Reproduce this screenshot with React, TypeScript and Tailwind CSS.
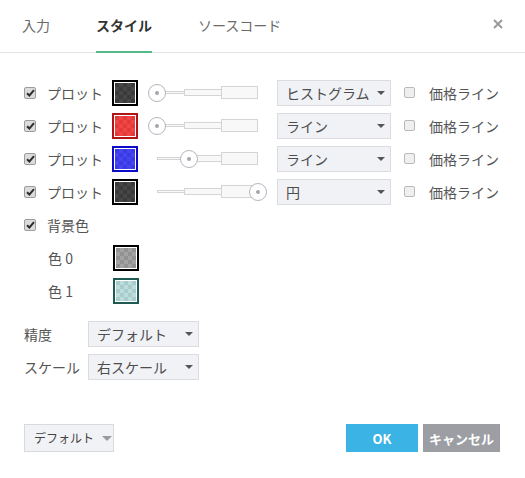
import React from "react";

const FONT = "font-['Noto_Sans_CJK_JP','Noto_Sans',sans-serif]";

function CheckOn() {
  return (
    <div className="w-[12px] h-[12px] rounded-[2px] border border-[#9c9c9c] bg-[#dcdcdc] flex items-center justify-center shrink-0">
      <svg width="9" height="8" viewBox="0 0 9 8">
        <path d="M1 4.2 L3.4 6.5 L8 1.2" fill="none" stroke="#2e2e2e" strokeWidth="2" />
      </svg>
    </div>
  );
}

function CheckOff() {
  return <div className="w-[11px] h-[11px] rounded-[2px] border border-[#b9b9b9] bg-[#efefef] shrink-0" />;
}

function Caret({ cls = "border-t-[#555]" }: { cls?: string }) {
  return (
    <div className={`w-0 h-0 border-l-[4px] border-r-[4px] border-t-[4px] border-l-transparent border-r-transparent ${cls}`} />
  );
}

function Swatch({ border, bg }: { border: string; bg: string }) {
  return (
    <div className={`w-[26px] h-[26px] border-2 ${border} bg-white p-px shrink-0`}>
      <div className={`w-full h-full ${bg} bg-[length:8px_8px] bg-size-[8px_8px]`} />
    </div>
  );
}

function Slider({ left }: { left: string }) {
  return (
    <div className="relative w-[119px] h-[18px] flex items-center px-[9px] shrink-0">
      <div className="w-[27px] h-[3px] border border-r-0 border-[#d4d4d4] bg-[#f8f8f8]" />
      <div className="w-[37px] h-[7px] border border-r-0 border-[#d4d4d4] bg-[#f8f8f8]" />
      <div className="w-[37px] h-[13px] border border-[#d4d4d4] bg-[#f8f8f8]" />
      <div
        className={`absolute top-0 ${left} w-[18px] h-[18px] rounded-full border border-[#b3b6be] bg-white flex items-center justify-center`}
      >
        <div className="w-[4px] h-[4px] rounded-full bg-[#a3a7af]" />
      </div>
    </div>
  );
}

function Select({ label, w }: { label: string; w: string }) {
  return (
    <div
      className={`${w} h-[26px] border border-[#dadce0] bg-[#f1f2f6] flex items-center pl-[8px] pr-[5px] shrink-0`}
    >
      <span className="flex-1 text-[14px] text-[#4d4d4d] leading-none whitespace-nowrap">{label}</span>
      <Caret />
    </div>
  );
}

const rows = [
  { border: "border-black", bg: "bg-[image:repeating-conic-gradient(#474747_0%_25%,#3a3a3a_0%_50%)]", left: "left-[0px]", sel: "ヒストグラム" },
  { border: "border-[#b01414]", bg: "bg-[image:repeating-conic-gradient(#f04646_0%_25%,#e53a3a_0%_50%)]", left: "left-[0px]", sel: "ライン" },
  { border: "border-[#0a0ac8]", bg: "bg-[image:repeating-conic-gradient(#4646f0_0%_25%,#3a3ae4_0%_50%)]", left: "left-[32px]", sel: "ライン" },
  { border: "border-black", bg: "bg-[image:repeating-conic-gradient(#474747_0%_25%,#3a3a3a_0%_50%)]", left: "left-[101px]", sel: "円" },
];

export default function App() {
  return (
    <div className={`w-[525px] h-[478px] bg-white ${FONT} text-[#555] flex flex-col`}>
      <div className="flex h-[53px] border-b border-[#e2e4e8] items-stretch pl-[22px]">
        <div className="flex items-center border-b-2 border-transparent -mb-px text-[14px] text-[#6b6b6b] mr-[46px]">入力</div>
        <div className="flex items-center border-b-2 border-[#55b98a] -mb-px text-[14px] text-[#333] font-bold mr-[46px]">スタイル</div>
        <div className="flex items-center border-b-2 border-transparent -mb-px text-[14px] text-[#6b6b6b]">ソースコード</div>
        <div className="ml-auto pr-[22px] flex items-center pb-[5px]">
          <svg width="10" height="10" viewBox="0 0 10 10">
            <path d="M1 1 L9 9 M9 1 L1 9" stroke="#9a9a9a" strokeWidth="2" />
          </svg>
        </div>
      </div>

      <div className="flex flex-col pl-[24px] pt-[23px] text-[14px]">
        {rows.map((r, i) => (
          <div key={i} className="h-[33px] flex items-center">
            <CheckOn />
            <span className="ml-[11px] w-[56px] whitespace-nowrap leading-none">プロット</span>
            <div className="ml-[9px]">
              <Swatch border={r.border} bg={r.bg} />
            </div>
            <div className="ml-[10px]">
              <Slider left={r.left} />
            </div>
            <div className="ml-[10px]">
              <Select label={r.sel} w="w-[114px]" />
            </div>
            <div className="ml-[13px]">
              <CheckOff />
            </div>
            <span className="ml-[14px] whitespace-nowrap leading-none">価格ライン</span>
          </div>
        ))}

        <div className="h-[33px] flex items-center">
          <CheckOn />
          <span className="ml-[11px] whitespace-nowrap leading-none">背景色</span>
        </div>
        <div className="h-[33px] flex items-center pl-[24px]">
          <span className="w-[65px] whitespace-nowrap leading-none">色 0</span>
          <Swatch border="border-black" bg="bg-[image:repeating-conic-gradient(#a3a3a3_0%_25%,#929292_0%_50%)]" />
        </div>
        <div className="h-[33px] flex items-center pl-[24px]">
          <span className="w-[65px] whitespace-nowrap leading-none">色 1</span>
          <Swatch border="border-[#1d5a52]" bg="bg-[image:repeating-conic-gradient(#bddcdc_0%_25%,#a8cccc_0%_50%)]" />
        </div>

        <div className="h-[33px] flex items-center mt-[10px]">
          <span className="w-[64px] whitespace-nowrap leading-none">精度</span>
          <Select label="デフォルト" w="w-[111px]" />
        </div>
        <div className="h-[33px] flex items-center">
          <span className="w-[64px] whitespace-nowrap leading-none">スケール</span>
          <Select label="右スケール" w="w-[111px]" />
        </div>
      </div>

      <div className="flex items-center pl-[24px] pr-[25px] mt-[41px]">
        <div className="w-[90px] h-[28px] border border-[#d8dade] bg-[#f1f2f6] flex items-center pl-[9px] gap-[8px]">
          <span className="text-[12px] text-[#444] leading-none whitespace-nowrap">デフォルト</span>
          <div className="w-0 h-0 border-l-[5px] border-r-[5px] border-t-[5px] border-l-transparent border-r-transparent border-t-[#9a9a9a]" />
        </div>
        <div className="ml-auto w-[72px] h-[28px] bg-[#3bb3e4] flex items-center justify-center text-white font-bold text-[13px] leading-none">
          OK
        </div>
        <div className="ml-[5px] w-[77px] h-[28px] bg-[#9c9ea4] flex items-center justify-center text-white font-bold text-[13px] leading-none whitespace-nowrap">
          キャンセル
        </div>
      </div>
    </div>
  );
}
